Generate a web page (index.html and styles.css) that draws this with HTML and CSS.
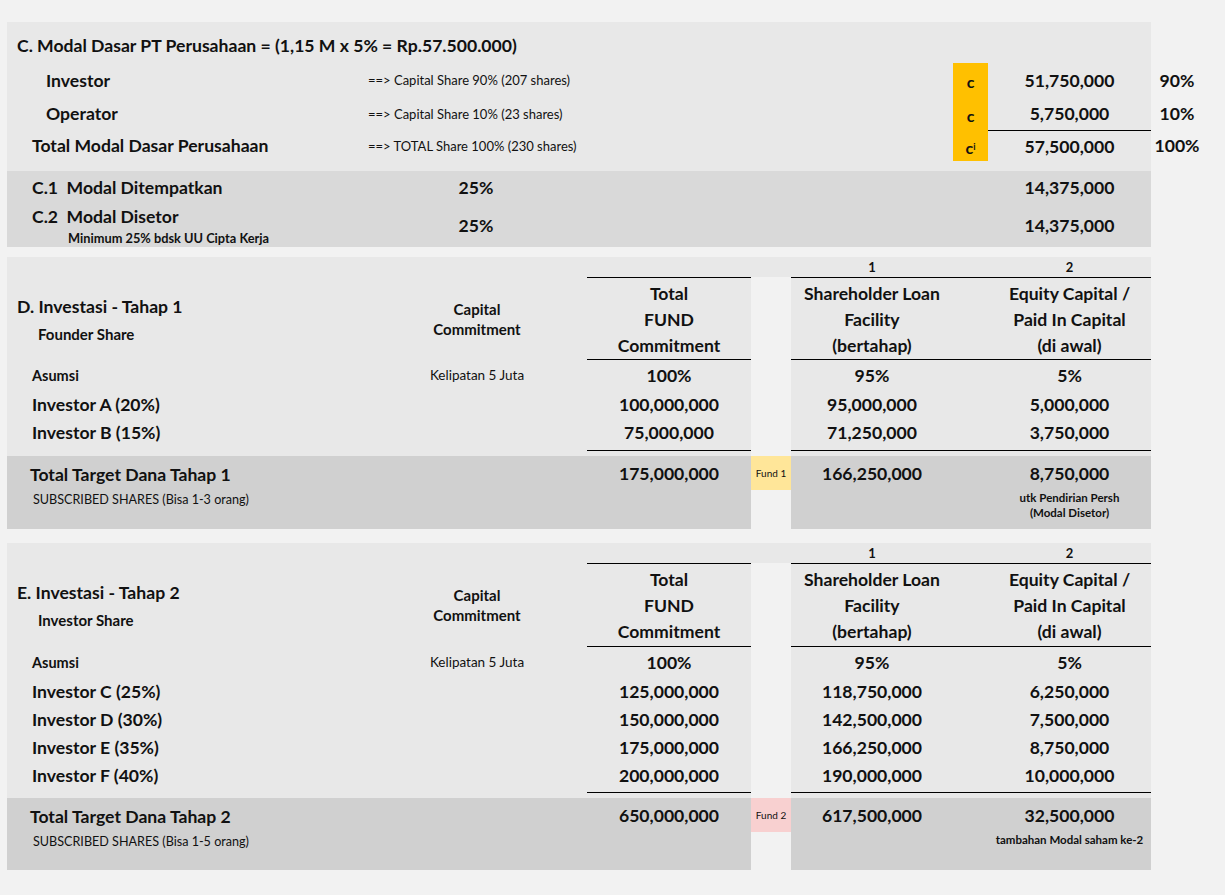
FILE: index.html
```html
<!DOCTYPE html>
<html>
<head>
<meta charset="utf-8">
<link rel="stylesheet" href="styles.css">
</head>
<body>
<div class="page">

  <section class="sec-c">
    <div class="c-panel">
      <div class="c-upper">
        <div class="c-title">C. Modal Dasar PT Perusahaan = (1,15 M x 5% = Rp.57.500.000)</div>
        <div class="c-grid">
          <div class="lbl ind-inv">Investor</div>
          <div class="arrow">==&gt; Capital Share 90% (207 shares)</div>
          <div class="badge-c">c</div>
          <div class="val">51,750,000</div>

          <div class="lbl ind-inv">Operator</div>
          <div class="arrow">==&gt; Capital Share 10% (23 shares)</div>
          <div class="badge-c">c</div>
          <div class="val">5,750,000</div>

          <div class="lbl ind-tot">Total Modal Dasar Perusahaan</div>
          <div class="arrow">==&gt; TOTAL Share 100% (230 shares)</div>
          <div class="badge-c">c<sup>i</sup></div>
          <div class="val topline">57,500,000</div>
        </div>
      </div>
      <div class="c-lower">
        <div class="lbl ind-tot">C.1&nbsp; Modal Ditempatkan</div>
        <div class="val">25%</div>
        <div></div>
        <div class="val">14,375,000</div>

        <div class="c2-label">
          <div class="c2-title">C.2&nbsp; Modal Disetor</div>
          <div class="c2-sub">Minimum 25% bdsk UU Cipta Kerja</div>
        </div>
        <div class="val">25%</div>
        <div></div>
        <div class="val">14,375,000</div>
      </div>
    </div>
    <div class="c-side">
      <div class="val">90%</div>
      <div class="val">10%</div>
      <div class="val">100%</div>
    </div>
  </section>

  <section class="sec-inv sec-d">
    <div class="inv-title">
      <div class="t1">D. Investasi - Tahap 1</div>
      <div class="t2">Founder Share</div>
    </div>
    <div class="inv-cap">Capital<br>Commitment</div>
    <div class="strip k6">1</div>
    <div class="strip k8">2</div>

    <div class="hdr k4">Total<br>FUND<br>Commitment</div>
    <div class="gap gap-d"></div>
    <div class="hdr k6">Shareholder Loan<br>Facility<br>(bertahap)</div>
    <div class="hdr k7"></div>
    <div class="hdr k8">Equity Capital /<br>Paid In Capital<br>(di awal)</div>

    <div class="cell k1 r3 lbl-s">Asumsi</div>
    <div class="cell k2 r3 cap-note">Kelipatan 5 Juta</div>
    <div class="cell k4 r3 num">100%</div>
    <div class="cell k6 r3 num">95%</div>
    <div class="cell k8 r3 num">5%</div>

    <div class="cell k1 r4 lbl-l">Investor A (20%)</div>
    <div class="cell k4 r4 num">100,000,000</div>
    <div class="cell k6 r4 num">95,000,000</div>
    <div class="cell k8 r4 num">5,000,000</div>

    <div class="cell k1 r5 lbl-l">Investor B (15%)</div>
    <div class="cell k4 r5 num">75,000,000</div>
    <div class="cell k6 r5 num">71,250,000</div>
    <div class="cell k8 r5 num">3,750,000</div>

    <div class="rule rule-d k4 r6"></div>
    <div class="rule rule-d k68 r6"></div>

    <div class="tot k1 r7">
      <div class="tot-title">Total Target Dana Tahap 1</div>
      <div class="tot-sub">SUBSCRIBED SHARES (Bisa 1-3 orang)</div>
    </div>
    <div class="tot k23 r7"></div>
    <div class="tot tot-num k4 r7">175,000,000</div>
    <div class="gap k5 r7"><div class="fund fund-1">Fund 1</div></div>
    <div class="tot tot-num k6 r7">166,250,000</div>
    <div class="tot k7 r7"></div>
    <div class="tot tot-num k8 r7">
      <div>8,750,000</div>
      <div class="tot-note">utk Pendirian Persh<br>(Modal Disetor)</div>
    </div>
  </section>

  <section class="sec-inv sec-e">
    <div class="inv-title">
      <div class="t1">E. Investasi - Tahap 2</div>
      <div class="t2">Investor Share</div>
    </div>
    <div class="inv-cap">Capital<br>Commitment</div>
    <div class="strip k6">1</div>
    <div class="strip k8">2</div>

    <div class="hdr k4">Total<br>FUND<br>Commitment</div>
    <div class="gap gap-e"></div>
    <div class="hdr k6">Shareholder Loan<br>Facility<br>(bertahap)</div>
    <div class="hdr k7"></div>
    <div class="hdr k8">Equity Capital /<br>Paid In Capital<br>(di awal)</div>

    <div class="cell k1 r3 lbl-s">Asumsi</div>
    <div class="cell k2 r3 cap-note">Kelipatan 5 Juta</div>
    <div class="cell k4 r3 num">100%</div>
    <div class="cell k6 r3 num">95%</div>
    <div class="cell k8 r3 num">5%</div>

    <div class="cell k1 r4 lbl-l">Investor C (25%)</div>
    <div class="cell k4 r4 num">125,000,000</div>
    <div class="cell k6 r4 num">118,750,000</div>
    <div class="cell k8 r4 num">6,250,000</div>

    <div class="cell k1 r5 lbl-l">Investor D (30%)</div>
    <div class="cell k4 r5 num">150,000,000</div>
    <div class="cell k6 r5 num">142,500,000</div>
    <div class="cell k8 r5 num">7,500,000</div>

    <div class="cell k1 r6 lbl-l">Investor E (35%)</div>
    <div class="cell k4 r6 num">175,000,000</div>
    <div class="cell k6 r6 num">166,250,000</div>
    <div class="cell k8 r6 num">8,750,000</div>

    <div class="cell k1 r7 lbl-l">Investor F (40%)</div>
    <div class="cell k4 r7 num">200,000,000</div>
    <div class="cell k6 r7 num">190,000,000</div>
    <div class="cell k8 r7 num">10,000,000</div>

    <div class="rule rule-e k4 r8"></div>
    <div class="rule rule-e k68 r8"></div>

    <div class="tot k1 r9">
      <div class="tot-title">Total Target Dana Tahap 2</div>
      <div class="tot-sub">SUBSCRIBED SHARES (Bisa 1-5 orang)</div>
    </div>
    <div class="tot k23 r9"></div>
    <div class="tot tot-num k4 r9">650,000,000</div>
    <div class="gap k5 r9"><div class="fund fund-2">Fund 2</div></div>
    <div class="tot tot-num k6 r9">617,500,000</div>
    <div class="tot k7 r9"></div>
    <div class="tot tot-num k8 r9">
      <div>32,500,000</div>
      <div class="tot-note note-e">tambahan Modal saham ke-2</div>
    </div>
  </section>

</div>
</body>
</html>
```

FILE: styles.css
```css
* { box-sizing: border-box; }

body {
  margin: 0;
  background: #f2f2f2;
  font-family: Lato, "Open Sans", "Liberation Sans", sans-serif;
  font-weight: 700;
  color: #111;
}

.page {
  padding: 22px 0 0 7px;
}

/* ---------- Section C ---------- */
.sec-c {
  display: flex;
}

.c-panel {
  width: 1144px;
}

.c-upper {
  background: #e8e8e8;
  height: 149px;
}

.c-title {
  font-size: 17.6px;
  line-height: 22px;
  height: 41px;
  padding: 13px 0 0 10px;
}

.c-grid {
  display: grid;
  grid-template-columns: 361px 585px 35px 163px;
  grid-template-rows: 34px 33px 31px;
}

.c-grid > div,
.c-lower > div,
.c-side > div {
  display: flex;
  align-items: center;
}

.lbl {
  font-size: 17.6px;
}

.ind-inv { padding-left: 39px; }
.ind-tot { padding-left: 25px; }

.arrow {
  font-size: 13px;
  font-weight: 400;
}

.c-grid > .badge-c {
  background: #ffc000;
  justify-content: center;
  font-size: 16px;
  padding-top: 3px;
}

.badge-c sup {
  font-size: 9px;
  line-height: 0;
}

.val {
  justify-content: center;
  font-size: 17.6px;
}

.topline {
  border-top: 1px solid #000;
}

.c-lower {
  background: #d9d9d9;
  height: 76px;
  display: grid;
  grid-template-columns: 400px 138px 443px 163px;
  grid-template-rows: 32px 44px;
}

.c-lower > .c2-label {
  display: block;
  padding: 4px 0 0 25px;
}

.c2-title {
  font-size: 17.6px;
  line-height: 20px;
}

.c2-sub {
  font-size: 12.8px;
  line-height: 16px;
  margin: 3px 0 0 36px;
}

.c-side {
  width: 52px;
  padding-top: 41px;
  display: grid;
  grid-template-rows: 34px 33px 31px;
  align-self: flex-start;
}

/* ---------- Sections D / E ---------- */
.sec-inv {
  display: grid;
  width: 1144px;
  background: #e8e8e8;
  grid-template-columns: 413px 114px 53px 164px 40px 162px 35px 163px;
}

.sec-d {
  margin-top: 10px;
  grid-template-rows: 20px 83px 30px 28px 28px 10px 73px;
}

.sec-e {
  margin-top: 14px;
  grid-template-rows: 20px 84px 30px 28px 28px 28px 28px 9px 72px;
}

.k1 { grid-column: 1; }
.k2 { grid-column: 2; }
.k23 { grid-column: 2 / 4; }
.k4 { grid-column: 4; }
.k5 { grid-column: 5; }
.k6 { grid-column: 6; }
.k7 { grid-column: 7; }
.k8 { grid-column: 8; }
.k68 { grid-column: 6 / 9; }

.r3 { grid-row: 3; }
.r4 { grid-row: 4; }
.r5 { grid-row: 5; }
.r6 { grid-row: 6; }
.r7 { grid-row: 7; }
.r8 { grid-row: 8; }
.r9 { grid-row: 9; }

.inv-title {
  grid-column: 1;
  grid-row: 1 / 3;
  padding: 39px 0 0 10px;
}

.t1 {
  font-size: 17.6px;
  line-height: 22px;
}

.t2 {
  font-size: 15px;
  line-height: 20px;
  margin: 6px 0 0 21px;
}

.inv-cap {
  grid-column: 2;
  grid-row: 1 / 3;
  padding-top: 42px;
  text-align: center;
  font-size: 15px;
  line-height: 20px;
  white-space: nowrap;
}

.strip {
  grid-row: 1;
  display: flex;
  align-items: center;
  justify-content: center;
  font-size: 13px;
}

.hdr {
  grid-row: 2;
  border-top: 1px solid #000;
  border-bottom: 1px solid #000;
  padding-top: 3px;
  text-align: center;
  font-size: 17.6px;
  line-height: 26px;
  white-space: nowrap;
}

.gap {
  background: #f2f2f2;
}

.gap-d { grid-column: 5; grid-row: 2 / 7; }
.gap-e { grid-column: 5; grid-row: 2 / 9; }

.cell {
  display: flex;
  align-items: center;
}

.lbl-s {
  font-size: 14.5px;
  padding-left: 25px;
}

.lbl-l {
  font-size: 17.6px;
  padding-left: 25px;
}

.cap-note {
  justify-content: center;
  font-size: 13.5px;
  font-weight: 400;
  white-space: nowrap;
}

.num {
  justify-content: center;
  font-size: 17.6px;
}

.rule {
  align-self: start;
  border-bottom: 1px solid #000;
}

.rule-d { height: 5px; }
.rule-e { height: 4px; }

.tot {
  background: #d0d0d0;
}

.tot.k1 {
  padding: 8px 0 0 23px;
}

.tot-title {
  font-size: 17.6px;
  line-height: 22px;
}

.tot-sub {
  font-size: 12.6px;
  font-weight: 400;
  line-height: 18px;
  margin: 5px 0 0 3px;
}

.tot-num {
  padding-top: 7px;
  text-align: center;
  font-size: 17.6px;
  line-height: 22px;
}

.tot-note {
  font-size: 11.5px;
  line-height: 15px;
  margin-top: 5px;
  white-space: nowrap;
}

.fund {
  height: 34px;
  display: flex;
  align-items: center;
  justify-content: center;
  font-size: 10px;
  font-weight: 400;
}

.fund-1 { background: #ffe699; }
.fund-2 { background: #f8d0d0; }
```
